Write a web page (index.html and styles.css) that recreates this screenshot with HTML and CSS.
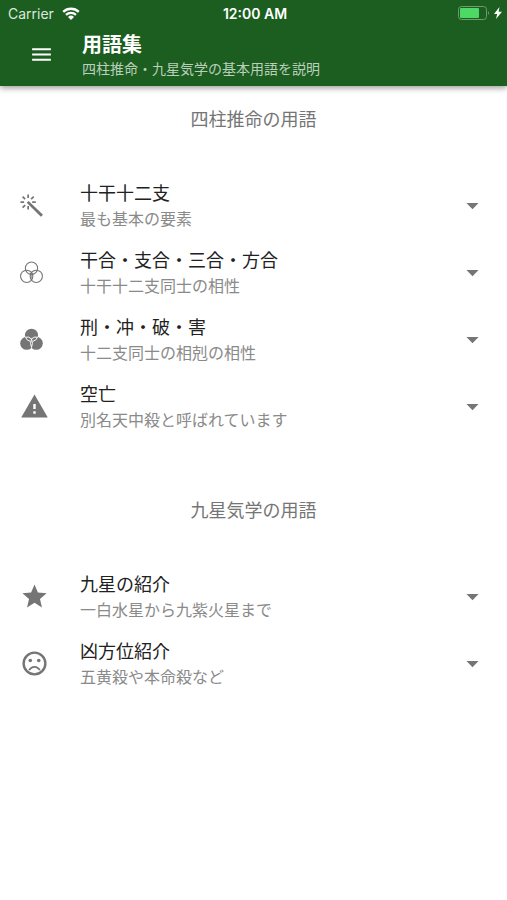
FILE: index.html
```html
<!DOCTYPE html>
<html lang="ja">
<head>
    <meta charset="UTF-8">
    <meta name="viewport" content="width=device-width, initial-scale=1.0">
    <title>用語集</title>
    <link rel="stylesheet" href="styles.css">
</head>
<body>
    <header class="app-header">
        <div class="status-bar">
            <div class="status-left">
                <span>Carrier</span>
                <svg class="wifi" viewBox="0 0 18 13" aria-hidden="true">
                    <path d="M1.2 4.9a11.2 11.2 0 0 1 15.6 0M4 7.8a7.2 7.2 0 0 1 10 0" fill="none" stroke="#fff" stroke-width="2.3"/>
                    <path d="M6 9.9a4.3 4.3 0 0 1 6 0L9 13z" fill="#fff"/>
                </svg>
            </div>
            <span class="clock">12:00 AM</span>
            <div class="status-right">
                <svg class="battery" viewBox="0 0 32 14" aria-hidden="true">
                    <rect x=".5" y=".5" width="28" height="13" rx="3" fill="none" stroke="#6f9a72"/>
                    <path d="M30 5q2 2 0 4z" fill="#6f9a72"/>
                    <rect x="2" y="2" width="19" height="10" rx="1" fill="#4cd964"/>
                </svg>
                <svg class="bolt" viewBox="0 0 8 12" aria-hidden="true">
                    <path d="M5.5 0L0 7h3.2L2 12l6-7.200H4.600z" fill="#fff"/>
                </svg>
            </div>
        </div>
        <div class="toolbar">
            <button class="menu-button" type="button" aria-label="メニュー">
                <svg class="menu-icon" viewBox="0 0 24 24"><path d="M3 18h18v-2H3v2zm0-5h18v-2H3v2zm0-7v2h18V6H3z"/></svg>
            </button>
            <div>
                <h1>用語集</h1>
                <p class="tagline">四柱推命・九星気学の基本用語を説明</p>
            </div>
        </div>
    </header>

    <main>
        <section class="term-section">
            <h2>四柱推命の用語</h2>
            <ul class="term-list">
                <li>
                    <button class="term" type="button" aria-expanded="false">
                        <svg class="icon icon-small" viewBox="0 0 24 24">
                            <path d="M9 7.200L24 21.600l-2.200 2.200L7 9.200z"/>
                            <path d="M8.500 .5v3.800M8.500 12.500v3.800M.5 8.500h3.800M12.700 8.500h3.800M2.700 2.700l2.700 2.700M14.300 2.700l-2.700 2.700M2.700 14.300l2.700-2.700" fill="none" stroke="#757575" stroke-width="1.800"/>
                        </svg>
                        <span class="term-text">
                            <span class="term-title">十干十二支</span>
                            <span class="term-note">最も基本の要素</span>
                        </span>
                        <svg class="arrow" viewBox="0 0 24 24"><path d="M7 10l5 5 5-5z"/></svg>
                    </button>
                </li>
                <li>
                    <button class="term" type="button" aria-expanded="false">
                        <svg class="icon icon-small" viewBox="0 0 24 24">
                            <g fill="none" stroke="#757575" stroke-width="1.100">
                                <circle cx="12" cy="7.500" r="6.400"/>
                                <circle cx="7" cy="16" r="6.400"/>
                                <circle cx="17" cy="16" r="6.400"/>
                            </g>
                            <path d="M9.700 12.600q2.300-1.200 4.600 0L12 19z" opacity=".6"/>
                        </svg>
                        <span class="term-text">
                            <span class="term-title">干合・支合・三合・方合</span>
                            <span class="term-note">十干十二支同士の相性</span>
                        </span>
                        <svg class="arrow" viewBox="0 0 24 24"><path d="M7 10l5 5 5-5z"/></svg>
                    </button>
                </li>
                <li>
                    <button class="term" type="button" aria-expanded="false">
                        <svg class="icon icon-small" viewBox="0 0 24 24">
                            <circle cx="12" cy="7.500" r="6.800"/>
                            <circle cx="7" cy="16" r="6.800"/>
                            <circle cx="17" cy="16" r="6.800"/>
                            <path d="M5.700 9.600Q9 8.600 12 11.300q3-2.700 6.300-1.700M5.700 9.600q1.200 3.500 5 4.400M18.300 9.600q-1.200 3.500-5 4.400M12 11.300q-2 4.700 0 9q2-4.300 0-9" fill="none" stroke="#fff" stroke-width="1"/>
                        </svg>
                        <span class="term-text">
                            <span class="term-title">刑・冲・破・害</span>
                            <span class="term-note">十二支同士の相剋の相性</span>
                        </span>
                        <svg class="arrow" viewBox="0 0 24 24"><path d="M7 10l5 5 5-5z"/></svg>
                    </button>
                </li>
                <li>
                    <button class="term" type="button" aria-expanded="false">
                        <svg class="icon" viewBox="0 0 24 24"><path d="M1 21h22L12 2 1 21zm12-3h-2v-2h2v2zm0-4h-2v-4h2v4z"/></svg>
                        <span class="term-text">
                            <span class="term-title">空亡</span>
                            <span class="term-note">別名天中殺と呼ばれています</span>
                        </span>
                        <svg class="arrow" viewBox="0 0 24 24"><path d="M7 10l5 5 5-5z"/></svg>
                    </button>
                </li>
            </ul>
        </section>

        <section class="term-section">
            <h2>九星気学の用語</h2>
            <ul class="term-list">
                <li>
                    <button class="term" type="button" aria-expanded="false">
                        <svg class="icon" viewBox="0 0 24 24"><path d="M12 17.270L18.180 21l-1.640-7.030L22 9.240l-7.190-.61L12 2 9.190 8.630 2 9.240l5.460 4.730L5.820 21z"/></svg>
                        <span class="term-text">
                            <span class="term-title">九星の紹介</span>
                            <span class="term-note">一白水星から九紫火星まで</span>
                        </span>
                        <svg class="arrow" viewBox="0 0 24 24"><path d="M7 10l5 5 5-5z"/></svg>
                    </button>
                </li>
                <li>
                    <button class="term" type="button" aria-expanded="false">
                        <svg class="icon" viewBox="0 0 24 24">
                            <circle cx="12" cy="12" r="9" fill="none" stroke="#757575" stroke-width="2"/>
                            <circle cx="8.500" cy="9.500" r="1.500"/>
                            <circle cx="15.500" cy="9.500" r="1.500"/>
                            <path d="M12 14c-2.330 0-4.320 1.450-5.120 3.500h1.670c.69-1.190 1.970-2 3.450-2s2.750.81 3.450 2h1.670c-.8-2.050-2.790-3.500-5.120-3.500z"/>
                        </svg>
                        <span class="term-text">
                            <span class="term-title">凶方位紹介</span>
                            <span class="term-note">五黄殺や本命殺など</span>
                        </span>
                        <svg class="arrow" viewBox="0 0 24 24"><path d="M7 10l5 5 5-5z"/></svg>
                    </button>
                </li>
            </ul>
        </section>
    </main>
</body>
</html>
```
FILE: styles.css
```css
* {
    margin: 0;
    padding: 0;
    box-sizing: border-box;
}

body {
    background: #fff;
    color: #212121;
    font-family: "Noto Sans CJK JP", sans-serif;
}

button {
    background: none;
    border: none;
    color: inherit;
    font: inherit;
    cursor: pointer;
}

svg {
    display: block;
    flex-shrink: 0;
}

.app-header {
    background: #1b5e20;
    color: #fff;
    padding-bottom: 6px;
    box-shadow: 0 2px 6px rgba(0, 0, 0, 0.4);
}

.status-bar {
    display: grid;
    grid-template-columns: 1fr auto 1fr;
    align-items: center;
    height: 28px;
    padding: 0 5px 2px 8px;
    font-family: Inter, sans-serif;
    font-size: 14px;
}

.status-left,
.status-right {
    display: flex;
    align-items: center;
    gap: 8px;
}

.status-left {
    color: #dce8dd;
}

.status-right {
    justify-content: flex-end;
    gap: 4px;
}

.clock {
    font-weight: 600;
}

.wifi {
    width: 18px;
    height: 13px;
}

.battery {
    width: 32px;
    height: 14px;
}

.bolt {
    width: 8px;
    height: 12px;
}

.toolbar {
    display: flex;
    align-items: center;
    gap: 28px;
    padding-left: 29px;
}

.menu-icon {
    width: 25px;
    height: 25px;
    fill: #fff;
}

h1 {
    font-size: 20px;
    font-weight: 700;
    line-height: 32px;
}

.tagline {
    color: #bbd0bc;
    font-size: 14px;
    line-height: 16px;
    margin-bottom: 4px;
}

.term-section {
    padding-top: 20px;
    padding-bottom: 37px;
}

h2 {
    color: #757575;
    font-size: 18px;
    font-weight: 400;
    line-height: 24px;
    text-align: center;
    margin-bottom: 42px;
}

.term-list {
    list-style: none;
}

.term {
    display: flex;
    align-items: center;
    width: 100%;
    height: 67px;
    padding: 0 20px;
    text-align: left;
}

.icon,
.arrow {
    width: 29px;
    height: 29px;
    fill: #757575;
}

.icon-small {
    width: 23px;
    height: 23px;
    margin-right: 6px;
}

.term-text {
    display: flex;
    flex: 1;
    flex-direction: column;
    margin-left: 31px;
    padding-bottom: 2px;
    line-height: 26px;
}

.term-title {
    font-size: 18px;
}

.term-note {
    color: #8a8a8a;
    font-size: 16px;
}
```
